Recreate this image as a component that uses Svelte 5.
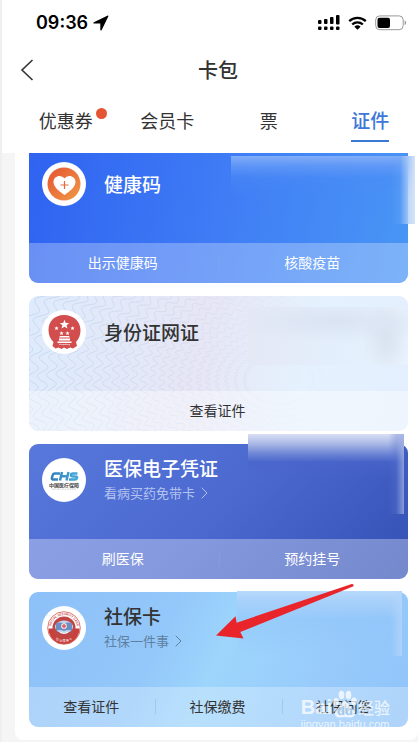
<script lang="ts">
	type Card = {
		id: string;
		title: string;
		note?: string;
		actions: string[];
	};

	const tabs = [
		{ label: '优惠券', dot: true },
		{ label: '会员卡', dot: false },
		{ label: '票', dot: false },
		{ label: '证件', dot: false }
	];

	const cards: Card[] = [
		{ id: 'health', title: '健康码', actions: ['出示健康码', '核酸疫苗'] },
		{ id: 'identity', title: '身份证网证', actions: ['查看证件'] },
		{ id: 'medical', title: '医保电子凭证', note: '看病买药免带卡', actions: ['刷医保', '预约挂号'] },
		{ id: 'social', title: '社保卡', note: '社保一件事', actions: ['查看证件', '社保缴费', '社保问答'] }
	];

	let active = '证件';

	// Wavy rings behind the identity card
	function ring(radius: number) {
		const points: string[] = [];
		for (let i = 0; i <= 720; i++) {
			const angle = (i / 720) * Math.PI * 2;
			const r = radius + Math.sin(angle * 56 + radius / 16) * (1 + radius / 60);
			const x = 250 + Math.cos(angle) * r * 1.15;
			const y = 84 + Math.sin(angle) * r * 0.8;
			points.push(`${x.toFixed(1)} ${y.toFixed(1)}`);
		}
		return 'M' + points.join('L');
	}

	const rings = Array.from({ length: 26 }, (_, i) => ring(30 + i * 8));
</script>

<div class="page">
	<header>
		<div class="status">
			<span class="time">09:36</span>
			<svg class="location" width="16" height="16" viewBox="0 0 16 16">
				<path d="M14.800.6.800 7.200c-.7.4-.5 1.400.2 1.400h6.300v6.200c0 .8 1 1 1.400.2L15.400 1.300c.1-.5-.1-.8-.6-.7z" />
			</svg>
			<span class="spacer"></span>
			<svg width="22" height="16" viewBox="0 0 22 16">
				<rect x="0" y="5" width="3.500" height="4" rx="1" />
				<rect x="6" y="4" width="3.500" height="5" rx="1" />
				<rect x="12" y="2" width="3.500" height="7" rx="1" />
				<rect x="18" y="0" width="3.500" height="9.500" rx="1" />
				<rect x="0" y="11.500" width="3.500" height="3.500" rx="1" />
				<rect x="6" y="11.500" width="3.500" height="3.500" rx="1" />
				<rect x="12" y="11.500" width="3.500" height="3.500" rx="1" />
				<rect x="18" y="11.500" width="3.500" height="3.500" rx="1" />
			</svg>
			<svg width="19" height="14" viewBox="0 0 19 14">
				<path d="M1.200 5.200a12 12 0 0 1 16.600 0M4.200 8.500a7.600 7.600 0 0 1 10.600 0" fill="none" stroke="#000" stroke-width="2.300" />
				<path d="M9.500 13.800 6.400 10.700a4.500 4.500 0 0 1 6.200 0z" />
			</svg>
			<svg width="32" height="16" viewBox="0 0 32 16">
				<rect x=".7" y=".9" width="27.500" height="13.800" rx="4" fill="#fff" stroke="#999" />
				<rect x="2.500" y="2.700" width="12.500" height="10.200" rx="2" />
				<path d="M29.600 5.500c2 .6 2 4 0 4.600z" fill="#999" />
			</svg>
		</div>

		<div class="nav">
			<button class="back" aria-label="返回">
				<svg width="14" height="22" viewBox="0 0 14 22">
					<path d="M12.500 1 2 11l10.500 10" fill="none" stroke="#333" stroke-width="1.600" />
				</svg>
			</button>
			<h1>卡包</h1>
		</div>

		<nav class="tabs">
			{#each tabs as tab}
				<button class="tab" class:active={tab.label === active} on:click={() => (active = tab.label)}>
					{tab.label}
					{#if tab.dot}<i class="dot"></i>{/if}
				</button>
			{/each}
		</nav>
	</header>

	<main>
		<div class="panel">
			{#each cards as card}
				<section class="card {card.id}">
					{#if card.id === 'identity'}
						<svg class="pattern" width="379" height="135" viewBox="0 0 379 135" preserveAspectRatio="none">
							<defs>
								<linearGradient id="wave" gradientUnits="userSpaceOnUse" x1="0" y1="0" x2="379" y2="0">
									<stop offset="0" stop-color="#bfd5ee" />
									<stop offset=".4" stop-color="#d6d8ec" />
									<stop offset=".65" stop-color="#e1e6f5" />
									<stop offset=".8" stop-color="#e5f0fe" />
								</linearGradient>
							</defs>
							{#each rings as d}
								<path {d} fill="none" stroke="url(#wave)" stroke-width=".8" />
							{/each}
						</svg>
					{/if}

					<div class="info">
						<span class="logo">
							{#if card.id === 'health'}
								<svg width="44" height="44" viewBox="0 0 44 44">
									<defs>
										<linearGradient id="orange" x1="0" y1="0" x2="1" y2="1">
											<stop offset="0" stop-color="#e55332" />
											<stop offset="1" stop-color="#f09a45" />
										</linearGradient>
									</defs>
									<circle cx="22" cy="22" r="16.500" fill="url(#orange)" />
									<path d="M22.500 33C17 29 11.500 25 11.500 20c0-6.500 8-8 11-3.500 3-4.500 11-3 11 3.500 0 5-5.500 9-11 13z" fill="#fff" />
									<path d="M22.500 19v8M18.500 23h8" stroke="#e56a3a" stroke-width="1.200" />
								</svg>
							{:else if card.id === 'identity'}
								<svg width="44" height="44" viewBox="0 0 44 44">
									<path d="M22 5C12.500 5 6.500 11.500 6.500 20c0 5.500 2 9 5 12l-1 4 3 2.500 3-1 3 1.500 2.500-1.500 3 1.500 3-1.500 3 1 4-2.500-1-4c3-3 4.500-7 4.500-12 0-8.500-7-15-16.500-15z" fill="#d24e4e" />
									<path d="m22.500 9.700 1.300 3.200 3.400.2-2.600 2.200.9 3.300-3-1.900-3 1.900.9-3.300-2.600-2.200 3.400-.2z" fill="#fff" />
									<path id="star" d="m14.500 16.200.6 1.300 1.500.1-1.100.9.4 1.500-1.400-.8-1.300.8.4-1.500-1.200-.9 1.500-.1z" fill="#fff" />
									<use href="#star" x="16" />
									<use href="#star" x="5" y="5" />
									<use href="#star" x="11" y="5" />
									<path d="M18 26h9l1 1.500H17zM17 28.500h11v2H17zM15.500 31.500h14V33h-14z" fill="#fff" />
									<path d="M17 34.500c2-1 3 1 5.500 0s3.500 1 5.500 0" fill="none" stroke="#f5caca" />
								</svg>
							{:else if card.id === 'medical'}
								<svg width="44" height="44" viewBox="0 0 44 44">
									<defs>
										<linearGradient id="chs" gradientUnits="userSpaceOnUse" x1="9" y1="0" x2="36" y2="0">
											<stop offset="0" stop-color="#327db9" />
											<stop offset="1" stop-color="#45aadc" />
										</linearGradient>
									</defs>
									<path d="M18 15.500h-5.500q-1.500 0-1.800 1.500l-.8 3q-.2 1.500 1 1.500H16M20 14l-2 8.500M26.500 14l-2 8.500M19.500 18.300h6M35.500 15.500H31q-2 0-2 1.500t2 1.500h2.500q2 0 1.500 1.500t-2 1.500H27" fill="none" stroke="url(#chs)" stroke-width="2.500" />
									<text x="22" y="29" text-anchor="middle" class="chs-name">中国医疗保障</text>
									<path d="M10 31.200h24" stroke="#bbb" stroke-width=".6" stroke-dasharray="2 .5" />
								</svg>
							{:else}
								<svg width="44" height="44" viewBox="0 0 44 44">
									<defs>
										<path id="arc-top" d="M9 22a13 13 0 0 1 26 0" />
										<path id="arc-bottom" d="M7 21a15 15 0 0 0 30 0" />
									</defs>
									<circle cx="22" cy="22" r="16.300" fill="#fff" stroke="#d2544c" stroke-width=".8" />
									<path d="M6.500 22.500h31a15.500 15.500 0 0 1-31 0z" fill="#c8403c" />
									<circle cx="22" cy="22" r="11.500" fill="#bf4644" />
									<ellipse cx="22" cy="21" rx="9" ry="6.500" fill="#c3d7ee" />
									<path d="M14 17.500q4-2 8 0 4-2 8 0V25q-4-2-8 0-4-2-8 0z" fill="#6b8fc2" />
									<circle cx="22" cy="20" r="3" fill="#efd3d9" />
									<path d="M22 18v4M20 20h4" stroke="#cc3f3c" />
									<path d="M18 26.500q4 2 8 0" fill="none" stroke="#fff" />
									<text class="seal-top"><textPath href="#arc-top" startOffset="50%" text-anchor="middle">SOCIAL SECURITY CARD</textPath></text>
									<text class="seal-bottom"><textPath href="#arc-bottom" startOffset="50%" text-anchor="middle">社 会 保 障 卡</textPath></text>
								</svg>
							{/if}
						</span>
						<div class="text">
							<h2>{card.title}</h2>
							{#if card.note}
								<a class="note" href="#{card.id}">
									{card.note}
									<svg width="7" height="12" viewBox="0 0 7 12">
										<path d="m.7.7 5.300 5.300L.7 11.300" fill="none" stroke="currentColor" />
									</svg>
								</a>
							{/if}
						</div>
					</div>

					<div class="mask"></div>

					<div class="actions">
						{#each card.actions as action}
							<button>{action}</button>
						{/each}
					</div>

					{#if card.id === 'social'}
						<svg class="arrow" width="140" height="58" viewBox="0 0 140 58">
							<path d="M1 52.500 20.500 33.300l1.200 6.400L136 1.200q3-.5 2.500 2L25.300 49l3.200 6.500z" fill="#e9252b" />
						</svg>
						<div class="watermark">
							<div class="brand">
								<span>Bai</span>
								<svg width="26" height="28" viewBox="0 0 25 28">
									<ellipse cx="3.500" cy="12" rx="2.800" ry="4" />
									<ellipse cx="9" cy="5" rx="2.800" ry="4.200" />
									<ellipse cx="16" cy="5" rx="2.800" ry="4.200" />
									<ellipse cx="21.500" cy="11.500" rx="2.800" ry="4" />
									<path d="M12.500 11c-3 0-4 4-6.500 6.500s-4 3.500-3.500 6.500 3 4 5.500 3.500 6-.5 9 0 5-1 5.500-3.500-1.500-4-4-6.500-3-6.500-6-6.500z" />
									<text x="12.500" y="25" text-anchor="middle">du</text>
								</svg>
								<span class="cjk">经验</span>
							</div>
							<small>jingyan.baidu.com</small>
						</div>
					{/if}
				</section>
			{/each}
		</div>
	</main>
</div>

<style>
	:global(body) {
		margin: 0;
		background: #f5f5f5;
	}

	.page {
		border-left: 2px solid #efefef;
		overflow: hidden;
		font-family: 'Noto Sans CJK SC', sans-serif;
		color: #333;
	}

	button {
		border: 0;
		padding: 0;
		background: none;
		font: inherit;
		color: inherit;
		cursor: pointer;
	}

	svg {
		display: block;
		flex-shrink: 0;
	}

	header {
		background: #fff;
	}

	.status {
		display: flex;
		align-items: center;
		gap: 8px;
		height: 46px;
		padding: 0 11px 0 34px;
	}

	.time {
		font: 600 18px/24px Inter, sans-serif;
		color: #000;
	}

	.location {
		margin-left: -3px;
	}

	.spacer {
		flex: 1;
	}

	.nav {
		display: grid;
		grid-template-columns: 56px 1fr 40px;
		align-items: center;
		height: 48px;
	}

	.back {
		padding-left: 18px;
	}

	h1 {
		margin: 0;
		font-size: 20px;
		line-height: 28px;
		font-weight: 500;
		text-align: center;
	}

	.tabs {
		display: grid;
		grid-template-columns: repeat(4, 1fr);
		justify-items: center;
		margin-right: -3px;
		padding: 12px 0 11px 13px;
	}

	.tab {
		position: relative;
		height: 36px;
		padding-bottom: 6px;
		border-bottom: 2px solid transparent;
		font-size: 18px;
		line-height: 28px;
	}

	.tab.active {
		border-color: #3c78d8;
		color: #3c78d8;
		font-size: 19px;
		font-weight: 500;
	}

	.dot {
		position: absolute;
		top: 2px;
		right: -14px;
		width: 11px;
		height: 11px;
		border-radius: 50%;
		background: #e55533;
	}

	main {
		padding: 0 0 8px 13px;
	}

	.panel {
		display: grid;
		gap: 13px;
		padding: 0 10px 13px 14px;
		border-radius: 0 0 8px 8px;
		background: #fff;
	}

	.card {
		position: relative;
		display: flex;
		flex-direction: column;
		border-radius: 9px;
	}

	.pattern {
		position: absolute;
		width: 100%;
		height: 100%;
		border-radius: 9px;
	}

	.info {
		position: relative;
		display: flex;
		align-items: center;
		gap: 18px;
		height: 50px;
		padding: 11px 13px 34px;
	}

	.logo {
		width: 44px;
		height: 44px;
		border-radius: 50%;
		background: #fff;
	}

	.chs-name {
		font-size: 5px;
		font-weight: 700;
		fill: #444;
	}

	.seal-top {
		font: 700 3px 'Liberation Sans', sans-serif;
		fill: #c8403c;
	}

	.seal-bottom {
		font-size: 3px;
		fill: #fff;
	}

	h2 {
		margin: 0;
		font-size: 19px;
		line-height: 26px;
		font-weight: 500;
	}

	.note {
		display: flex;
		align-items: center;
		gap: 6px;
		font-size: 13px;
		line-height: 24px;
		color: #5f7f9f;
		text-decoration: none;
	}

	.actions {
		position: relative;
		display: flex;
		height: 40px;
		border-radius: 0 0 9px 9px;
		background: rgba(255, 255, 255, 0.28);
	}

	.actions button {
		position: relative;
		flex: 1;
		padding: 0 2px 2px 0;
		font-size: 14px;
		line-height: 20px;
	}

	.actions button + button::before {
		content: '';
		position: absolute;
		top: 12px;
		left: 0;
		width: 1px;
		height: 15px;
		background: rgba(140, 170, 220, 0.4);
	}

	/* The list is scrolled a little, so the first card loses its top edge */
	.health {
		border-radius: 0 0 9px 9px;
		background: linear-gradient(100deg, #2f63f1, #3f7cf5 50%, #4996f5);
		color: #fff;
	}

	.health .info {
		padding-top: 6px;
	}

	.identity {
		background: linear-gradient(100deg, #deebfc, #e6e6f5 45%, #e5f1fe 72%, #e3effe);
	}

	.identity .actions {
		background: rgba(255, 255, 255, 0.4);
	}

	.medical {
		background: linear-gradient(135deg, #5878dc, #4b69cf 50%, #3350b4);
		color: #fff;
	}

	.medical .note {
		color: #b3c2ee;
	}

	.medical .actions {
		background: rgba(255, 255, 255, 0.32);
	}

	.social {
		background: linear-gradient(115deg, #8cc0f8, #94c8fa 35%, #9dd5fc 50%, #98cbfb 75%, #90c3f9);
	}

	.mask {
		position: absolute;
	}

	.health .mask {
		top: 3px;
		right: -7px;
		width: 184px;
		height: 68px;
		background:
			linear-gradient(to left, #d5e3f8, rgba(175, 207, 248, 0.8) 7px, rgba(110, 168, 247, 0.3) 15px, transparent 24px),
			linear-gradient(#82adf8, rgba(100, 154, 247, 0.8) 10px, rgba(76, 138, 246, 0.4) 22px, transparent 40px);
	}

	.identity .mask {
		top: 11px;
		right: 0;
		width: 160px;
		height: 58px;
		background:
			radial-gradient(ellipse 24px 36px at 138px 32px, #d8e2f0, rgba(216, 226, 240, 0)),
			radial-gradient(ellipse 110px 22px at 90px 14px, #dae3f2, rgba(218, 227, 242, 0)),
			linear-gradient(90deg, #e5e8f5, #e3effd 60%, #e9f2fd);
	}

	.medical .mask {
		top: -10px;
		right: 4px;
		width: 156px;
		height: 80px;
		background:
			linear-gradient(to left, rgba(155, 172, 225, 0.8), rgba(90, 115, 205, 0.3) 8px, transparent 16px),
			linear-gradient(#d9e0f4, #a8b7e5 10px, #6c85d5 20px, rgba(74, 101, 202, 0.6) 28px, transparent 44px);
	}

	.social .mask {
		top: -1px;
		right: 6px;
		width: 165px;
		height: 65px;
		background:
			linear-gradient(to left, rgba(180, 213, 250, 0.8), transparent 12px),
			linear-gradient(#b8d9fb, #a8d0fa 10px, rgba(145, 196, 249, 0.5) 28px, transparent);
	}

	.arrow {
		position: absolute;
		top: -9px;
		right: 53px;
	}

	.watermark {
		position: absolute;
		right: 18px;
		bottom: -4px;
		color: rgba(255, 255, 255, 0.75);
		pointer-events: none;
	}

	.brand {
		display: flex;
		align-items: flex-end;
		font: 700 20px/22px 'Liberation Sans', sans-serif;
	}

	.brand svg {
		fill: rgba(255, 255, 255, 0.75);
	}

	.brand text {
		font-size: 13px;
		fill: #9fc9ee;
	}

	.cjk {
		font: 500 16px/22px 'Noto Sans CJK SC', sans-serif;
	}

	small {
		display: block;
		font: 11px/13px 'Liberation Sans', sans-serif;
	}
</style>
